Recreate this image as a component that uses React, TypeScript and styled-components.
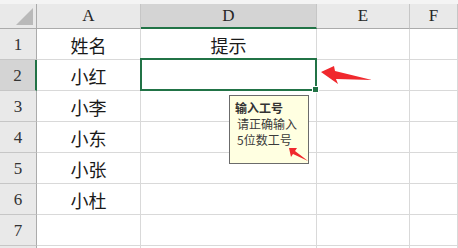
import { Fragment } from "react";
import styled, { createGlobalStyle } from "styled-components";

const GlobalStyle = createGlobalStyle`
  html, body {
    margin: 0;
    padding: 0;
    background: #ffffff;
  }
`;

const Sheet = styled.div`
  position: relative;
  width: 458px;
  height: 248px;
  overflow: hidden;
  background: #ffffff;
  font-family: "Noto Sans CJK SC", sans-serif;
`;

const TopStrip = styled.div`
  height: 4px;
  background: #f4f4f4;
`;

const Grid = styled.div`
  display: grid;
  grid-template-columns: 37px 104px 176px 93px 1fr;
  grid-template-rows: 25px;
  grid-auto-rows: 31px;
`;

const Corner = styled.div`
  background: #e9e9e9;
  border-right: 1px solid #ababab;
  border-bottom: 1px solid #ababab;
  svg {
    display: block;
  }
`;

const ColHead = styled.div<{ $active?: boolean }>`
  display: flex;
  align-items: center;
  justify-content: center;
  background: ${(p) => (p.$active ? "#d4d4d4" : "#e9e9e9")};
  border-right: 1px solid #c6c6c6;
  border-bottom: ${(p) => (p.$active ? "2px solid #217346" : "1px solid #ababab")};
  font-family: "Liberation Serif", serif;
  font-size: 17px;
  color: #262626;
  padding-top: ${(p) => (p.$active ? "1px" : "0")};
`;

const RowHead = styled.div<{ $active?: boolean }>`
  display: flex;
  align-items: center;
  justify-content: center;
  background: ${(p) => (p.$active ? "#d4d4d4" : "#e9e9e9")};
  border-right: ${(p) => (p.$active ? "2px solid #217346" : "1px solid #ababab")};
  border-bottom: 1px solid #c6c6c6;
  font-family: "Liberation Serif", serif;
  font-size: 17px;
  color: #333333;
  padding-top: 2px;
  box-sizing: border-box;
`;

const Cell = styled.div`
  position: relative;
  display: flex;
  align-items: center;
  justify-content: center;
  border-right: 1px solid #d9d9d9;
  border-bottom: 1px solid #d9d9d9;
  font-size: 18px;
  color: #1a1a1a;
  padding-top: 1px;
  box-sizing: border-box;
`;

const Selection = styled.div`
  position: absolute;
  top: -2px;
  left: -1px;
  right: -1px;
  bottom: -1px;
  border: 2px solid #217346;
  z-index: 2;
`;

const FillHandle = styled.span`
  position: absolute;
  right: -4px;
  bottom: -4px;
  width: 5px;
  height: 5px;
  background: #217346;
  border: 1px solid #ffffff;
`;

const InputTip = styled.div`
  position: absolute;
  left: 229px;
  top: 95px;
  width: 80px;
  height: 69px;
  box-sizing: border-box;
  background: #ffffe1;
  border: 1px solid #6b6b6b;
  padding: 4px 0 0 5px;
  font-size: 12px;
  line-height: 16px;
  color: #3a3a3a;
  z-index: 3;
`;

const TipTitle = styled.div`
  font-weight: 700;
  color: #333333;
`;

const TipText = styled.div`
  padding-left: 2px;
  white-space: pre;
`;

const Marks = styled.svg`
  position: absolute;
  left: 0;
  top: 0;
  z-index: 4;
  pointer-events: none;
`;

const columns = ["A", "D", "E", "F"];

const rows = [
  ["姓名", "提示"],
  ["小红", ""],
  ["小李", ""],
  ["小东", ""],
  ["小张", ""],
  ["小杜", ""],
  ["", ""],
];

export default function App() {
  return (
    <>
      <GlobalStyle />
      <Sheet>
        <TopStrip />
        <Grid>
          <Corner>
            <svg width="36" height="24">
              <polygon points="16,21 33,21 33,4" fill="#b9b9b9" />
            </svg>
          </Corner>
          {columns.map((c) => (
            <ColHead key={c} $active={c === "D"}>
              {c}
            </ColHead>
          ))}
          {rows.map((r, i) => (
            <Fragment key={i}>
              <RowHead $active={i === 1}>{i + 1}</RowHead>
              <Cell>{r[0]}</Cell>
              <Cell>
                {r[1]}
                {i === 1 && (
                  <Selection>
                    <FillHandle />
                  </Selection>
                )}
              </Cell>
              <Cell />
              <Cell />
            </Fragment>
          ))}
          {/* row 8 is only a sliver at the bottom edge */}
          <RowHead />
          <Cell />
          <Cell />
          <Cell />
          <Cell />
        </Grid>
        <InputTip>
          <TipTitle>输入工号</TipTitle>
          <TipText>请正确输入</TipText>
          <TipText>5位数工号</TipText>
        </InputTip>
        <Marks width="458" height="248">
          <polygon
            points="321,72 334,66 335,71 372,80 336,79 338,84"
            fill="#f0282d"
          />
          <polygon
            points="289,148 297,148 295,151 308,161 293,154 291,157"
            fill="#f0282d"
          />
        </Marks>
      </Sheet>
    </>
  );
}
